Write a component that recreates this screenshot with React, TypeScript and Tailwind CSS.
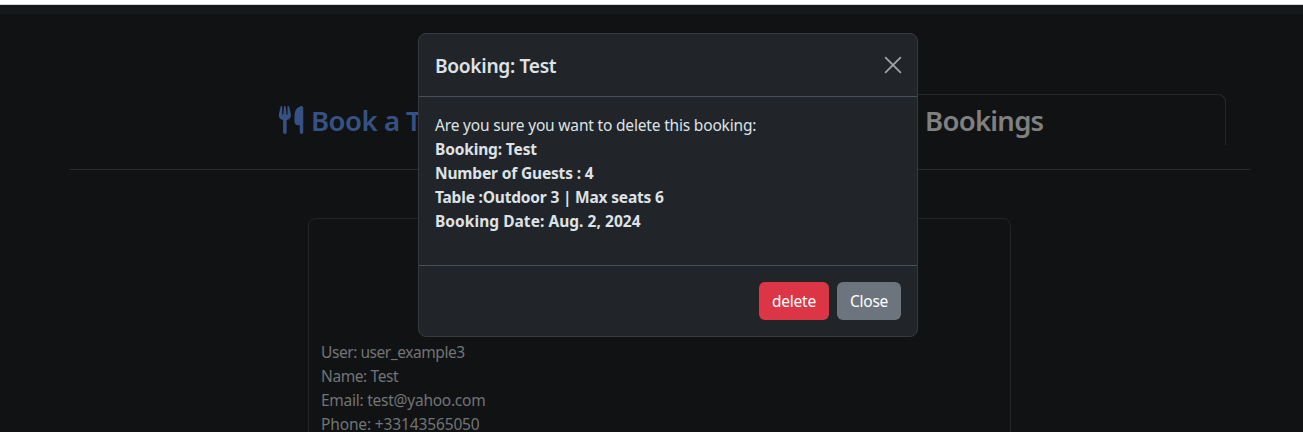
import { FaUtensils } from "react-icons/fa6";

const bookingInfo = [
  { text: "User: user_example3", tracking: "tracking-[-0.44px]" },
  { text: "Name: Test", tracking: "tracking-[-0.4px]" },
  { text: "Email: test@yahoo.com", tracking: "tracking-[-0.25px]" },
  { text: "Phone: +33143565050", tracking: "tracking-[-0.14px]" },
];

const summary = [
  { text: "Booking: Test", tracking: "tracking-[-0.15px]" },
  { text: "Number of Guests : 4", tracking: "tracking-[-0.16px]" },
  { text: "Table :Outdoor 3 | Max seats 6", tracking: "tracking-[-0.19px]" },
  { text: "Booking Date: Aug. 2, 2024", tracking: "tracking-[0.04px]" },
];

function BookingsPage() {
  return (
    <div className="flex h-full flex-col">
      <div className="h-1 shrink-0 bg-white" />
      <div className="h-px shrink-0 bg-[#d5d7d8]" />
      <div className="h-[9px] shrink-0 bg-[#14181b]" />
      <main className="ml-[69px] mt-20 w-[1181px]">
        <nav className="flex px-6 text-[27.5px] font-semibold leading-[34px]">
          <a className="flex h-[51px] w-[573px] items-center justify-start gap-[6px] whitespace-nowrap pb-px pl-[184px] pt-[3px] text-[#365284]">
            <FaUtensils className="mb-px size-7" />
            <span className="tracking-[-0.5px]">Book a Table</span>
          </a>
          <a className="flex h-[51px] flex-1 items-center justify-center rounded-t-lg border border-b-0 border-[#26282b] pb-px pl-[29px] pt-[3px] text-[#808080]">
            <span className="whitespace-nowrap tracking-[-0.75px] [word-spacing:2px]">My Bookings</span>
          </a>
        </nav>
        <hr className="mt-6 border-[#292b2d]" />
        <section className="mx-auto mt-12 h-[260px] w-[703px] rounded-lg border border-[#222427] px-3 pt-[121px] text-[15.5px] leading-6 text-[#727476]">
          {bookingInfo.map((row) => (
            <p key={row.text}>
              <span className={row.tracking}>{row.text}</span>
            </p>
          ))}
        </section>
      </main>
    </div>
  );
}

function DeleteDialog() {
  return (
    <div
      role="dialog"
      className="absolute left-[418px] top-[33px] w-[500px] rounded-lg border border-[#363a3e] bg-[#212529] text-[15.5px] leading-6 text-[#dee2e6]"
    >
      <header className="flex h-[63px] items-center justify-between border-b border-[#495057] px-4">
        <h5 className="pt-0.5 text-[19.2px] font-semibold leading-[30px]">
          <span className="tracking-[-0.33px]">Booking: Test</span>
        </h5>
        <button aria-label="Close" className="text-[#a0a3a5]">
          <svg viewBox="0 0 16 16" className="size-4" overflow="visible" fill="none" stroke="currentColor" strokeWidth="1.8" strokeLinecap="round">
            <path d="M.6.6l14.8 14.8M15.4.6L.6 15.4" />
          </svg>
        </button>
      </header>
      <div className="h-[168px] p-4">
        <p>
          <span className="tracking-[-0.18px]">Are you sure you want to delete this booking:</span>
        </p>
        {summary.map((row) => (
          <p key={row.text} className="font-bold">
            <span className={row.tracking}>{row.text}</span>
          </p>
        ))}
      </div>
      <footer className="flex justify-end gap-2 border-t border-[#495057] p-4 text-white">
        <button className="h-[38px] w-[70px] rounded-md bg-[#dc3545]">
          <span className="tracking-[-0.25px]">delete</span>
        </button>
        <button className="h-[38px] w-16 rounded-md bg-[#6c757d]">
          <span className="tracking-[-0.25px]">Close</span>
        </button>
      </footer>
    </div>
  );
}

export default function App() {
  return (
    <div className="relative h-[432px] w-[1303px] overflow-hidden bg-[#111214] font-['Noto_Sans',sans-serif]">
      <BookingsPage />
      <DeleteDialog />
    </div>
  );
}
